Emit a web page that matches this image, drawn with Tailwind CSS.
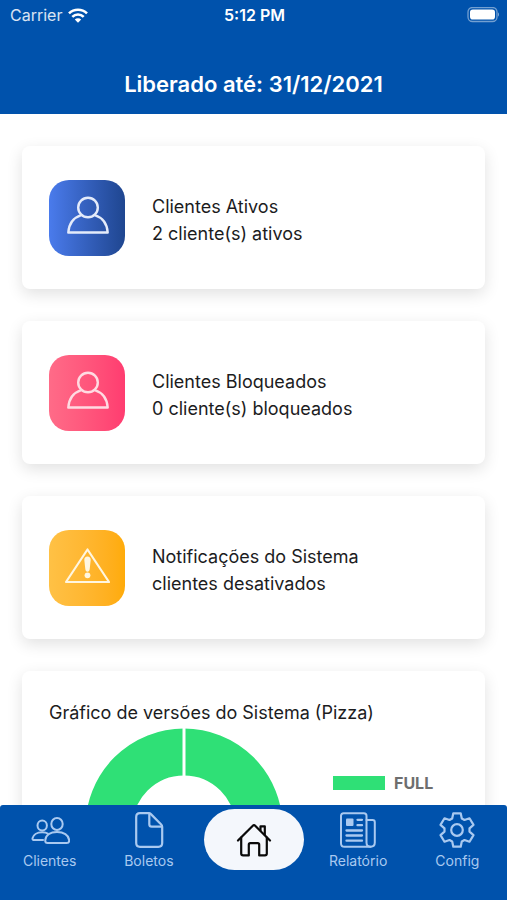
<!DOCTYPE html>
<html lang="pt-BR">
<head>
    <meta charset="UTF-8">
    <meta name="viewport" content="width=device-width, initial-scale=1.0">
    <title>Painel de Clientes</title>
    <script src="https://cdn.jsdelivr.net/npm/@tailwindcss/browser@4"></script>
</head>
<body class="bg-white h-screen flex flex-col overflow-hidden font-['Inter','Liberation_Sans',sans-serif] text-[#1c1c1e]">
    <!-- Header -->
    <header class="bg-[#0052ac] text-white shrink-0 pb-4">
        <div class="grid grid-cols-3 items-center h-[30px] pl-[10px] pr-2">
            <div class="flex items-center gap-[6px] text-base text-white/85">
                <span>Carrier</span>
                <svg class="w-5 h-[15px] text-white" viewBox="0 0 20 15" fill="none" stroke="currentColor" stroke-width="2.6">
                    <path d="M1 5.4a12.8 12.8 0 0 1 18 0"/>
                    <path d="M4.3 8.9a8.1 8.1 0 0 1 11.4 0"/>
                    <path d="M10 14.8l-3.2-3.3a4.6 4.6 0 0 1 6.4 0z" fill="currentColor" stroke="none"/>
                </svg>
            </div>
            <div class="text-center text-base font-semibold">5:12 PM</div>
            <svg class="w-[33px] h-4 justify-self-end" viewBox="0 0 33 16">
                <rect x="2" y=".5" width="29" height="14" rx="4.5" fill="none" stroke="#fff" stroke-opacity=".45" stroke-width="1.3"/>
                <rect x="4" y="2.5" width="25" height="10" rx="2.8" fill="#fff"/>
                <path d="M32 5.5c1.3.7 1.3 3.3 0 4z" fill="#fff" fill-opacity=".5"/>
            </svg>
        </div>
        <h1 class="mt-10 text-[22px] leading-7 font-semibold text-center">Liberado até: 31/12/2021</h1>
    </header>

    <main class="flex-1 min-h-0 overflow-hidden px-[22px] pt-8 flex flex-col gap-8 text-lg leading-[27px]">
        <!-- Status cards -->
        <section class="flex items-center gap-[27px] shrink-0 rounded-lg bg-white px-[27px] pt-[34px] pb-[33px] shadow-[0_5px_16px_rgba(0,0,0,0.12)]">
            <div class="size-[76px] rounded-[20px] bg-linear-to-r from-[#4a7bec] to-[#1f4690] flex items-center justify-center">
                <svg class="size-11 text-[#e4ebfa]" viewBox="0 0 44 44" fill="none" stroke="currentColor" stroke-width="2.4" stroke-linejoin="round">
                    <circle cx="23" cy="11.5" r="9.8"/>
                    <path d="M16.2 19.2C8.800 21.600 4 27.500 3.300 36.500h39.400c-.7-9-5.500-14.900-12.900-17.300"/>
                </svg>
            </div>
            <div class="pt-[3px]">
                <h2>Clientes Ativos</h2>
                <p>2 cliente(s) ativos</p>
            </div>
        </section>

        <section class="flex items-center gap-[27px] shrink-0 rounded-lg bg-white px-[27px] pt-[34px] pb-[33px] shadow-[0_5px_16px_rgba(0,0,0,0.12)]">
            <div class="size-[76px] rounded-[20px] bg-linear-to-r from-[#ff6b88] to-[#ff3c70] flex items-center justify-center">
                <svg class="size-11 text-[#ffdbe2]" viewBox="0 0 44 44" fill="none" stroke="currentColor" stroke-width="2.4" stroke-linejoin="round">
                    <circle cx="23" cy="11.5" r="9.8"/>
                    <path d="M16.2 19.2C8.800 21.600 4 27.500 3.300 36.500h39.400c-.7-9-5.500-14.900-12.900-17.300"/>
                </svg>
            </div>
            <div class="pt-[3px]">
                <h2>Clientes Bloqueados</h2>
                <p>0 cliente(s) bloqueados</p>
            </div>
        </section>

        <section class="flex items-center gap-[27px] shrink-0 rounded-lg bg-white px-[27px] pt-[34px] pb-[33px] shadow-[0_5px_16px_rgba(0,0,0,0.12)]">
            <div class="size-[76px] rounded-[20px] bg-linear-to-r from-[#ffc145] to-[#ffab08] flex items-center justify-center">
                <svg class="size-[46px] text-[#fff6e0]" viewBox="0 0 46 46" fill="none" stroke="currentColor" stroke-width="2.2" stroke-linejoin="round">
                    <path d="M23.500 4.500L45 37h-43z"/>
                    <path d="M23.500 11.500c2 0 3.300 1.400 3.200 3.600l-1 9c-.2 1.800-1 2.700-2.200 2.700s-2-.9-2.200-2.700l-1-9c-.1-2.200 1.200-3.600 3.200-3.600z" fill="currentColor" stroke="none"/>
                    <circle cx="23.500" cy="30.300" r="2.900" fill="currentColor" stroke="none"/>
                </svg>
            </div>
            <div class="pt-[3px]">
                <h2>Notificações do Sistema</h2>
                <p>clientes desativados</p>
            </div>
        </section>

        <!-- Version chart -->
        <section class="shrink-0 rounded-lg bg-white px-[27px] pt-7 pb-8 shadow-[0_5px_16px_rgba(0,0,0,0.12)]">
            <h2>Gráfico de versões do Sistema (Pizza)</h2>
            <div class="flex items-start gap-[50px] pl-9">
                <svg class="size-[198px] shrink-0 mt-[2px]" viewBox="0 0 198 198">
                    <circle cx="99" cy="99" r="75" fill="none" stroke="#2fe076" stroke-width="47"/>
                    <path d="M99 0v52" stroke="#fff" stroke-width="3"/>
                </svg>
                <div class="flex items-center gap-[9px] mt-[45px]">
                    <span class="w-[52px] h-[14px] bg-[#2fe076]"></span>
                    <span class="text-base font-bold text-[#6e6e6e]">FULL</span>
                </div>
            </div>
        </section>
    </main>

    <!-- Tab bar -->
    <nav class="shrink-0 h-[95px] rounded-t-[3px] bg-[#0052ac] pt-1 flex items-start text-sm leading-4 text-[#a9c9f0]">
        <a href="#clientes" class="flex-1 flex flex-col items-center gap-[3px] pt-[1px]">
            <svg class="size-10" viewBox="0 0 40 40" fill="none" stroke="currentColor" stroke-width="2" stroke-linejoin="round">
                <ellipse cx="27" cy="14" rx="5.7" ry="6"/>
                <path d="M15.200 30.500c.4-5.500 5.300-8.500 11.800-8.500s11.800 3 12.200 8.500c0 1.600-.9 2.500-2.400 2.500H17.600c-1.500 0-2.400-.9-2.400-2.500z"/>
                <ellipse cx="12.200" cy="15.500" rx="4.700" ry="5"/>
                <path d="M18.300 23.800c-1.600-1-3.800-1.500-6.100-1.500-5.400 0-9 2.800-9.700 6-.2 1 .5 1.800 1.600 1.800h9.700"/>
            </svg>
            <span>Clientes</span>
        </a>
        <a href="#boletos" class="flex-1 flex flex-col items-center gap-[3px] pt-[1px]">
            <svg class="size-10" viewBox="0 0 40 40" fill="none" stroke="currentColor" stroke-width="2.2" stroke-linejoin="round" stroke-linecap="round">
                <path d="M33.200 17v16c0 2.500-1.300 3.800-3.800 3.800H11c-2.500 0-3.800-1.300-3.800-3.800V7C7.200 4.500 8.500 3.200 11 3.200h8.700c1 0 1.500.2 2.200.9l10.300 10.500c.7.700 1 1.300 1 2.400z"/>
                <path d="M20.300 3.700v10.600c0 1.700.7 2.400 2.400 2.400h10"/>
            </svg>
            <span>Boletos</span>
        </a>
        <a href="#inicio" aria-label="Início" class="w-[100px] h-[61px] mx-[5px] rounded-full bg-[#f4f7fc] text-[#0a0a0a] flex items-center justify-center">
            <svg class="size-9" viewBox="0 0 36 36" fill="none" stroke="currentColor" stroke-width="2.2" stroke-linejoin="round" stroke-linecap="round">
                <path d="M2 18.500L16.800 3.800c.8-.8 1.600-.8 2.400 0L34 18.500"/>
                <path d="M5.200 15.700v15.800c0 1.200.7 1.900 1.900 1.900h5.700V22.700c0-.9.600-1.500 1.500-1.500h7.400c.9 0 1.500.6 1.500 1.500v10.700h5.700c1.200 0 1.900-.7 1.900-1.900V15.700"/>
                <path d="M24.500 8.500V4.300h4.300v8.500"/>
            </svg>
        </a>
        <a href="#relatorio" class="flex-1 flex flex-col items-center gap-[3px] pt-[1px]">
            <svg class="size-10" viewBox="0 0 40 40" fill="none" stroke="currentColor" stroke-width="2" stroke-linejoin="round" stroke-linecap="round">
                <path d="M28.500 10V5.800c0-1.700-.9-2.600-2.600-2.600H5.600C3.900 3.200 3 4.100 3 5.800v27.400c0 2.300 1.300 3.600 3.600 3.600h26"/>
                <path d="M28.500 10v22.600c0 2.600 1.700 4.200 4.100 4.200s4.200-1.600 4.200-4.200V12.200c0-1.400-.8-2.200-2.200-2.200z"/>
                <rect x="8" y="8.500" width="7.500" height="7.500" rx="1" fill="currentColor" stroke="none"/>
                <path d="M19.500 9.800h4.500M19.500 15.200h4.500M8.500 20.500H24M8.500 25.500H24M8.500 30.700H24" stroke-width="2.3"/>
            </svg>
            <span>Relatório</span>
        </a>
        <a href="#config" class="flex-1 flex flex-col items-center gap-[3px] pt-[1px]">
            <svg class="size-10" viewBox="0 0 40 40" fill="none" stroke="currentColor" stroke-width="2.2" stroke-linejoin="round">
                <circle cx="20" cy="20" r="5.8"/>
                <path d="M16.300 3.300h7.400l1.100 5.200 2.700 1.500 5-1.700 4 6.600-4 3.500v3.200l4 3.500-4 6.600-5-1.700-2.700 1.500-1.100 5.200h-7.400l-1.100-5.200-2.700-1.500-5 1.700-4-6.600 4-3.500v-3.200l-4-3.500 4-6.600 5 1.700 2.700-1.500z"/>
            </svg>
            <span>Config</span>
        </a>
    </nav>
</body>
</html>
